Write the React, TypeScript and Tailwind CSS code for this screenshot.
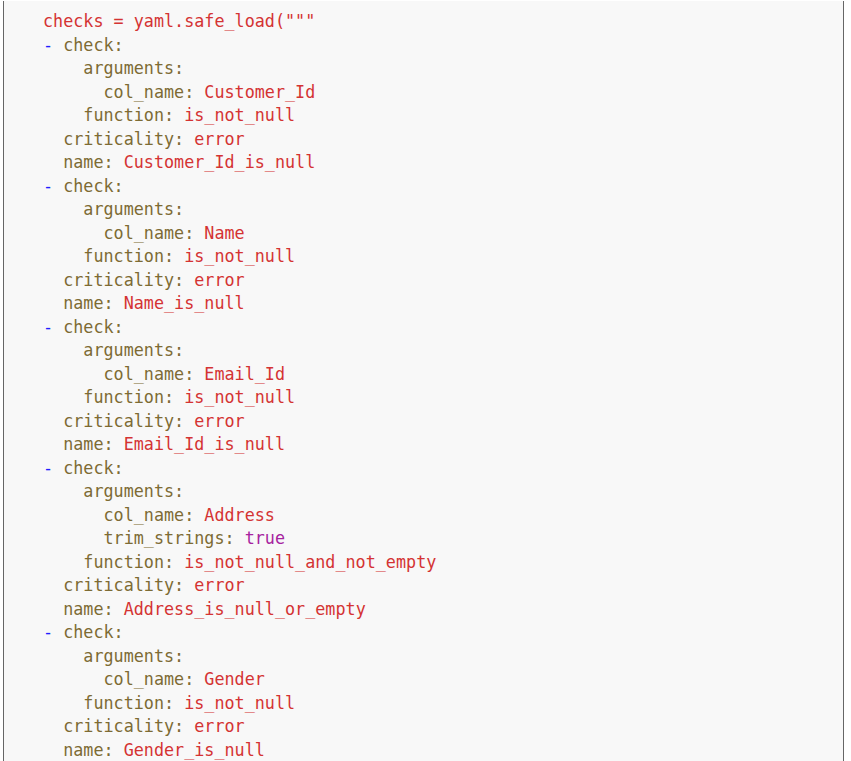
import React from "react";

const R = "text-[#d43333]";
const K = "text-[#7d6b34]";
const B = "text-[#1f1fff]";
const P = "text-[#a6239f]";

type Seg = [string, string];

const checks: { col: string; fn: string; name: string; trim?: boolean }[] = [
  { col: "Customer_Id", fn: "is_not_null", name: "Customer_Id_is_null" },
  { col: "Name", fn: "is_not_null", name: "Name_is_null" },
  { col: "Email_Id", fn: "is_not_null", name: "Email_Id_is_null" },
  { col: "Address", fn: "is_not_null_and_not_empty", name: "Address_is_null_or_empty", trim: true },
  { col: "Gender", fn: "is_not_null", name: "Gender_is_null" },
];

function buildLines(): Seg[][] {
  const lines: Seg[][] = [];
  lines.push([[R, 'checks = yaml.safe_load("""']]);
  for (const c of checks) {
    lines.push([[B, "- "], [K, "check:"]]);
    lines.push([[K, "    arguments:"]]);
    lines.push([[K, "      col_name: "], [R, c.col]]);
    if (c.trim) lines.push([[K, "      trim_strings: "], [P, "true"]]);
    lines.push([[K, "    function: "], [R, c.fn]]);
    lines.push([[K, "  criticality: "], [R, "error"]]);
    lines.push([[K, "  name: "], [R, c.name]]);
  }
  return lines;
}

export default function App() {
  const lines = buildLines();
  return (
    <div className="w-[851px] h-[761px] bg-white overflow-hidden">
      <div className="mt-px ml-[3px] w-[841px] h-[760px] bg-[#f8f8f8] border-l border-r border-[#666666] pl-[39px] pt-[9px]">
        <pre
          className="m-0 text-[16.75px] leading-[23.5px] whitespace-pre"
          style={{ fontFamily: '"DejaVu Sans Mono", "Liberation Mono", monospace' }}
        >
          {lines.map((l, i) => (
            <div key={i}>
              {l.map(([c, t], j) => (
                <span key={j} className={c}>
                  {t}
                </span>
              ))}
            </div>
          ))}
        </pre>
      </div>
    </div>
  );
}
